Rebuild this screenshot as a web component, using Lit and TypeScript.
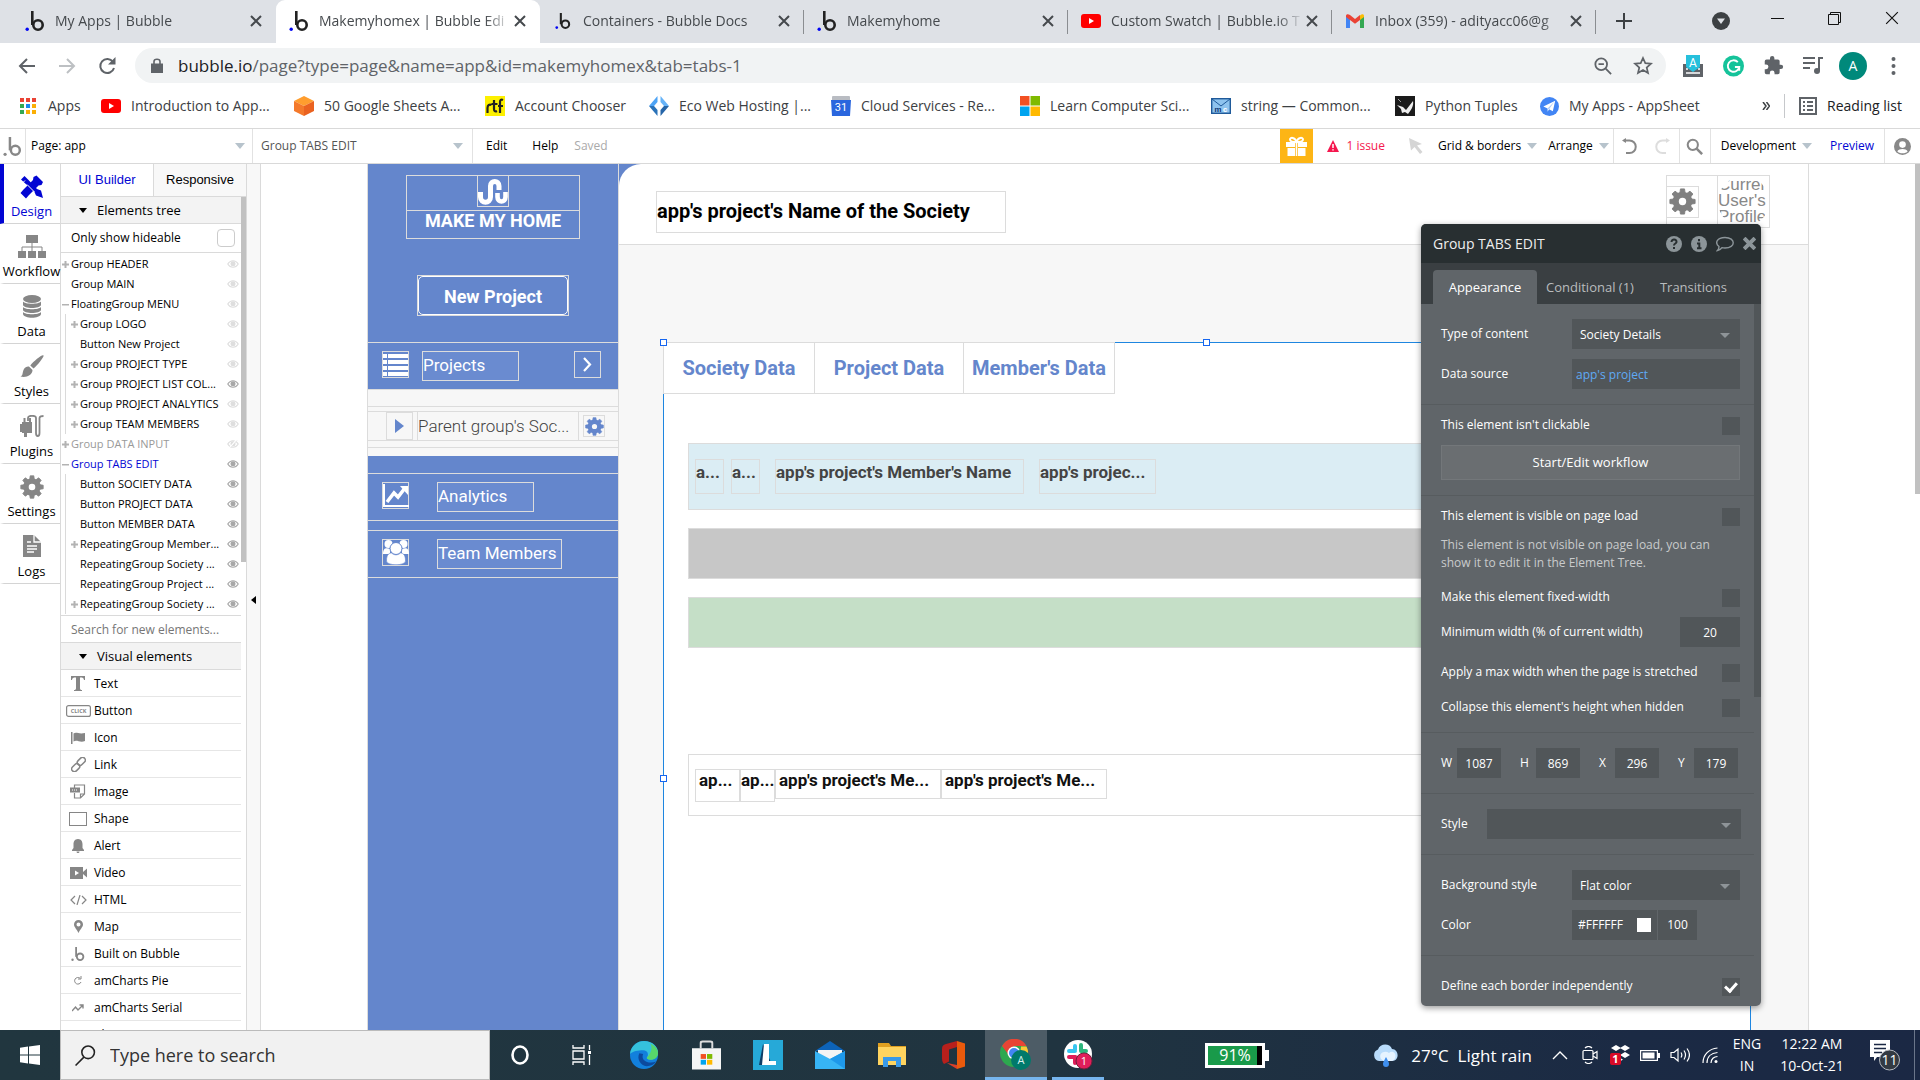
import { LitElement, html, svg, css, nothing } from "lit";
import { customElement } from "lit/decorators.js";
import { classMap } from "lit/directives/class-map.js";

const icon = (w: number, h: number, box: string, body: unknown) =>
  html`<svg width=${w} height=${h} viewBox=${box} fill="currentColor" aria-hidden="true">${body}</svg>`;

const turns = [0, 45, 90, 135, 180, 225, 270, 315];
const gear = (s: number) =>
  icon(s, s, "0 0 24 24", svg`<circle cx="12" cy="12" r="6" fill="none" stroke="currentColor" stroke-width="5.4"/>
    ${turns.map((t) => svg`<path d="M9.6 5 L10.2 .8 H13.8 L14.4 5 Z" stroke="currentColor" stroke-width=".8" transform="rotate(${t} 12 12)"/>`)}`);
const bubble = (s: number, dot = "#0205f3") =>
  icon(s, s, "0 0 20 20", svg`<circle cx="13" cy="14" r="4.7" fill="none" stroke="currentColor" stroke-width="2.6"/>
    <path d="M6 0h2.600v14H6z"/><circle cx="2.200" cy="18.200" r="1.700" fill=${dot}/>`);
const cross = (s: number, w = 2) =>
  icon(s, s, "0 0 12 12", svg`<path d="M1 1 11 11M11 1 1 11" stroke="currentColor" stroke-width=${w}/>`);
const youtube = icon(20, 14, "0 0 20 14", svg`<rect width="20" height="14" rx="3" fill="#f00"/><path d="M8 4v6l5-3z" fill="#fff"/>`);
const gmail = icon(18, 14, "0 0 18 14", svg`<path d="M0 2v12h4V5z" fill="#4285f4"/><path d="M18 2v12h-4V5z" fill="#34a853"/>
  <path d="M14 1.5 V6 l4-3V2c0-2-2-2.500-4-.5z" fill="#fbbc04"/><path d="M0 2c0-2 2-2.500 4-.9L9 5l5-3.900V6L9 9.800 0 3z" fill="#ea4335"/>`);
const magnifier = (s: number, w = 2) =>
  icon(s, s, "0 0 20 20", svg`<circle cx="8" cy="8" r="6" fill="none" stroke="currentColor" stroke-width=${w}/><path d="M12.500 12.500 19 19" stroke="currentColor" stroke-width=${w + 0.6}/>`);
const eye = (off = false) =>
  icon(12, 8, "0 0 24 16", svg`<path d="M12 1.500C6.500 1.500 3 5.500 1.500 8 3 10.500 6.500 14.500 12 14.500S21 10.500 22.500 8C21 5.500 17.500 1.500 12 1.500z" fill="none" stroke="currentColor" stroke-width="2.200"/><circle cx="12" cy="7.500" r="5"/>
  ${off ? svg`<path d="M5 16 19 0" stroke="#fff" stroke-width="3"/><path d="M7 16 20 1" stroke="currentColor" stroke-width="1.600"/>` : nothing}`);

const tabs = [
  { t: "My Apps | Bubble", i: bubble(20) },
  { t: "Makemyhomex | Bubble Edi", i: bubble(20), on: true },
  { t: "Containers - Bubble Docs", i: bubble(16) },
  { t: "Makemyhome", i: bubble(20) },
  { t: "Custom Swatch | Bubble.io T", i: youtube },
  { t: "Inbox (359) - adityacc06@g", i: gmail },
];

const marks = [
  { t: "Apps", i: icon(16, 17, "0 0 16 17", svg`
    ${[["#ea4335", 0, 0], ["#ea4335", 6, 0], ["#ea4335", 12, 0], ["#34a853", 0, 6], ["#1a88f0", 6, 6], ["#fbaf05", 12, 6], ["#34a853", 0, 12], ["#fbaf05", 6, 12], ["#fbaf05", 12, 12]]
      .map(([c, x, y]) => svg`<rect x=${x} y=${y} width="4" height="4" fill=${c}/>`)}`) },
  { t: "Introduction to App...", i: youtube },
  { t: "50 Google Sheets A...", i: icon(20, 20, "0 0 20 20", svg`<path d="M10 0 20 5 10 10 0 5z" fill="#ff9d2e"/><path d="M0 5l10 5v10L0 15z" fill="#f4792b"/><path d="M20 5 10 10v10l10-5z" fill="#ea6220"/>`) },
  { t: "Account Chooser", i: icon(20, 20, "0 0 20 20", svg`<rect width="20" height="20" fill="#fdf000"/><path d="M2.500 17v-5c0-3 2-4 4-3M9 4v9c0 2 1 3 3 2M6.500 8h6M15 17V6c0-2 1-3 3-2M13 10h5" fill="none" stroke="#222" stroke-width="2.200"/>`) },
  { t: "Eco Web Hosting |...", i: icon(20, 20, "0 0 20 20", svg`<path d="M8.500 0v6L5 10H0z" fill="#4da3f5"/><path d="M0 10h5l3.500 4v6z" fill="#2a72b8"/><path d="M11.500 0v6l3.500 4h5z" fill="#66b3f8"/><path d="M20 10h-5l-3.500 4v6z" fill="#2565a8"/>`) },
  { t: "Cloud Services - Re...", i: icon(20, 20, "0 0 20 20", svg`<rect x="1" width="18" height="5" rx="1" fill="#b9bcc2"/><path d="M0 4h20l-1 16H1z" fill="#2a66de"/><text x="10" y="15" font-size="11" text-anchor="middle" fill="#fff" font-family="Roboto">31</text>`) },
  { t: "Learn Computer Sci...", i: icon(20, 20, "0 0 20 20", svg`<path d="M0 0h9.500v9.500H0z" fill="#f25022"/><path d="M10.500 0H20v9.500h-9.500z" fill="#7fba00"/><path d="M0 10.500h9.500V20H0z" fill="#00a4ef"/><path d="M10.500 10.500H20V20h-9.500z" fill="#ffb900"/>`) },
  { t: "string — Common...", i: icon(20, 16, "0 0 20 16", svg`<rect x=".7" y=".7" width="18.600" height="14.600" fill="#8ec3ee" stroke="#1f5a9a" stroke-width="1.400"/><path d="M1 1l9 7 9-7" fill="none" stroke="#1f5a9a"/><text x="7" y="13.500" font-size="8" font-weight="700" text-anchor="middle" fill="#123c77" font-family="Roboto">m</text><text x="14" y="13.500" font-size="8" font-weight="700" text-anchor="middle" fill="#fff" font-family="Roboto">c</text>`) },
  { t: "Python Tuples", i: icon(20, 20, "0 0 20 20", svg`<rect width="20" height="20" fill="#1b1b1b"/><path d="M2 9l6 2 3 3 7-9c1 5-2 9-5 13l-3-2-3 1-1-4z" fill="#eee"/><path d="M3 3l3 3" stroke="#999"/>`) },
  { t: "My Apps - AppSheet", i: icon(19, 19, "0 0 20 20", svg`<circle cx="10" cy="10" r="10" fill="#4285f4"/><path d="M3.500 10 16 4l-2.500 11-4-2L8 15.500V12z" fill="#fff"/><path d="M8 12l7-7-5.500 8" fill="#a9c8fb"/>`) },
];

const rail = [
  { t: "Design", i: icon(24, 24, "0 0 24 24", svg`<path d="M4.500 1 8 4.500 17 14l4 1.500L23 23l-7-2.500-1.500-3.500L1 4.500z"/><path d="M3.500 14.500 13 5l.5-3 3-1.500L23 7l-1.500 3-3 .5L9 20l-3 3.500L.5 18z" /><path d="M7 9.500 14.500 17M5 5.500 3 7.500" stroke="#fff" stroke-width="1"/>`) },
  { t: "Workflow", i: icon(28, 24, "0 0 28 24", svg`<path d="M8 0h12v8H8zM0 16h8v7H0zM10 16h8v7h-8zM20 16h8v7h-8z"/><path d="M4 16v-4h20v4M14 8v8" fill="none" stroke="currentColor"/>`) },
  { t: "Data", i: icon(20, 23, "0 0 20 23", svg`<ellipse cx="10" cy="4" rx="9" ry="4"/><path d="M1 6.500c2 3 16 3 18 0v3.500c-1 4-17 4-18 0zM1 12c2 3 16 3 18 0v3c-1 4-17 4-18 0zM1 17c2 3 16 3 18 0v2c-1 5-17 5-18 0z"/>`) },
  { t: "Styles", i: icon(24, 23, "0 0 24 23", svg`<path d="M23.500.5c1 1-6 10-10 13l-3.200-3C14 6 22-.8 23.500.5zM9 11.500l3.500 3.500c0 5-6 8-12 6.500 3-1.500 1.500-4 3.500-7.500 1-2 3-2.800 5-2.500z"/>`) },
  { t: "Plugins", i: icon(25, 23, "0 0 25 23", svg`<path d="M3 7h10v11H3zM4.500 3h2v4h-2zM10 3h2v4h-2zM1 9h2v8H1zM5 18h3v4H5z"/><path d="M9 6V3c0-3 8-3 8 0v15c0 4 3.500 4 3.500 0V3c0-2 2-2 4-2" fill="none" stroke="currentColor" stroke-width="1.800"/>`) },
  { t: "Settings", i: gear(24) },
  { t: "Logs", i: icon(18, 22, "0 0 18 22", svg`<path d="M0 0h11l7 7v15H0z"/><path d="M11 0v7h7M4 11h10M4 14h10M4 17h7M4 7h4" fill="none" stroke="#fff" stroke-width="1.300"/>`) },
];

type Node = { t: string; d: number; m?: string; e?: string; c?: string };
const tree: Node[] = [
  { t: "Group HEADER", d: 0, m: "+" },
  { t: "Group MAIN", d: 0 },
  { t: "FloatingGroup MENU", d: 0, m: "-" },
  { t: "Group LOGO", d: 1, m: "+" },
  { t: "Button New Project", d: 1 },
  { t: "Group PROJECT TYPE", d: 1, m: "+" },
  { t: "Group PROJECT LIST COL...", d: 1, m: "+", e: "dark" },
  { t: "Group PROJECT ANALYTICS", d: 1, m: "+" },
  { t: "Group TEAM MEMBERS", d: 1, m: "+" },
  { t: "Group DATA INPUT", d: 0, m: "+", e: "off", c: "muted" },
  { t: "Group TABS EDIT", d: 0, m: "-", e: "dark", c: "chosen" },
  { t: "Button SOCIETY DATA", d: 1, e: "dark" },
  { t: "Button PROJECT DATA", d: 1, e: "dark" },
  { t: "Button MEMBER DATA", d: 1, e: "dark" },
  { t: "RepeatingGroup Member...", d: 1, m: "+", e: "dark" },
  { t: "RepeatingGroup Society ...", d: 1, e: "dark" },
  { t: "RepeatingGroup Project ...", d: 1, e: "dark" },
  { t: "RepeatingGroup Society ...", d: 1, m: "+", e: "dark" },
];

const visuals = [
  { t: "Text", i: icon(14, 15, "0 0 14 15", svg`<path d="M0 0h14v4h-1c-.5-2-1-2.500-4-2.500V12c0 1.500.5 2 2 2v1H3v-1c1.500 0 2-.5 2-2V1.500C2 1.500 1.500 2 1 4H0z"/>`) },
  { t: "Button", i: icon(25, 12, "0 0 25 12", svg`<rect x=".6" y=".6" width="23.800" height="10.800" rx="2" fill="none" stroke="currentColor" stroke-width="1.200"/><text x="12.500" y="8" font-size="5.500" font-weight="700" text-anchor="middle" font-family="Open Sans">CLICK</text>`) },
  { t: "Icon", i: icon(14, 12, "0 0 14 12", svg`<path d="M0 0h1.500v12H0zM2.500 1.500c3-2 5 1 11.500-.5v8c-5 2-8-1.500-11.500.5z"/>`) },
  { t: "Link", i: icon(15, 15, "0 0 15 15", svg`<g fill="none" stroke="currentColor" stroke-width="1.500"><rect x="6" y="1.500" width="9" height="5.500" rx="2.700" transform="rotate(-45 10.500 4.500)"/><rect x="0" y="8" width="9" height="5.500" rx="2.700" transform="rotate(-45 4.500 10.500)"/></g>`) },
  { t: "Image", i: icon(16, 15, "0 0 16 15", svg`<path d="M4.500 4V1h10v9l-4 4h-6V9M14.500 10h-4v4" fill="none" stroke="currentColor" stroke-width="1.200"/><rect y="3.500" width="10" height="5"/><path d="M2 6h6" stroke="#fff" stroke-width="1" stroke-dasharray="1 1"/>`) },
  { t: "Shape", i: icon(18, 14, "0 0 18 14", svg`<rect x=".5" y=".5" width="17" height="13" fill="#fff" stroke="currentColor"/>`) },
  { t: "Alert", i: icon(12, 14, "0 0 12 14", svg`<path d="M6 0c3.500 0 4.500 3 4.500 5v4L12 11v1H0v-1l1.500-2V5c0-2 1-5 4.500-5zM4.500 12.500h3c0 2-3 2-3 0z"/>`) },
  { t: "Video", i: icon(17, 12, "0 0 17 12", svg`<path d="M0 0h13v12H0z"/><path d="M13 5l4-3.500v9L13 7z"/><path d="M5 3.500v5L9 6z" fill="#fff"/>`) },
  { t: "HTML", i: icon(17, 10, "0 0 17 10", svg`<path d="M5 1 1 5l4 4M12 1l4 4-4 4M10 0 7 10" fill="none" stroke="currentColor" stroke-width="1.200"/>`) },
  { t: "Map", i: icon(9, 13, "0 0 9 13", svg`<path fill-rule="evenodd" d="M4.500 0A4.500 4.500 0 0 1 9 4.500C9 7 6 9.500 4.500 13 3 9.500 0 7 0 4.500A4.500 4.500 0 0 1 4.500 0zm0 2.500a2 2 0 1 0 0 4 2 2 0 0 0 0-4z"/>`) },
  { t: "Built on Bubble", i: bubble(14, "#888") },
  { t: "amCharts Pie", i: icon(8, 9, "0 0 8 9", svg`<path d="M6 2.200A3.300 3.300 0 1 0 7 6M7 0v3H4" fill="none" stroke="currentColor"/>`) },
  { t: "amCharts Serial", i: icon(12, 8, "0 0 12 8", svg`<path d="M0 7l3.500-4L6 6l5-5M7.500 1H11v3.500" fill="none" stroke="currentColor" stroke-width="1.400"/>`) },
  { t: "Chart", i: icon(10, 10, "0 0 10 10", svg`<path d="M0 0h10v10H0z"/>`) },
];

const slots = [
  { n: "Cortana", i: icon(18, 20, "0 0 18 20", svg`<ellipse cx="9" cy="10" rx="7.500" ry="8.500" fill="none" stroke="#fff" stroke-width="2.600"/>`) },
  { n: "Task view", i: icon(20, 20, "0 0 20 20", svg`<path d="M1 0v3h11V0M1 20v-3h11v3M1 6h11v8H1zM17.500 0v5M17.500 10v10" fill="none" stroke="#fff" stroke-width="1.300"/><path d="M16 6h3v3h-3z" fill="#fff"/>`) },
  { n: "Edge", i: icon(28, 30, "0 0 30 30", svg`<circle cx="15" cy="15" r="15" fill="#1280dc"/><path d="M0 14C1 5 8 0 15 0c9 0 15 6 15 12 0 5-4 8-8 8-3 0-4-1-4-2 2-2 2-8-4-8-5 0-11 1-14 4z" fill="#35c1dd"/><path d="M22 3c5 2 8 6 8 10 0 4-3 7-8 7-3 0-4-1-4-2 3-3 7-9 4-15z" fill="#58d66a"/><path d="M10 13c-3 6 1 13 8 14 4 0 8-2 10-5-7 3-17 0-14-8z" fill="#0c4a9e"/>`) },
  { n: "Store", i: icon(29, 30, "0 0 30 30", svg`<path d="M9 8V2.500C9 1.500 10 1 11 1h8c1 0 2 .5 2 1.500V8" fill="none" stroke="#ddd" stroke-width="2"/><path d="M0 8h30v22H0z" fill="#f5f5f5"/><path d="M9 14h5.500v5H9z" fill="#f25022"/><path d="M15.500 14H21v5h-5.500z" fill="#7fba00"/><path d="M9 20h5.500v5H9z" fill="#00a4ef"/><path d="M15.500 20H21v5h-5.500z" fill="#ffb900"/>`) },
  { n: "Launcher", i: icon(30, 30, "0 0 30 30", svg`<path d="M0 0h30v30H0z" fill="#26a9d8"/><path d="M10 4 6 25h13z" fill="#0e3d66"/><path d="M11 4h5v17h7v4H9z" fill="#fff"/>`) },
  { n: "Mail", i: icon(30, 28, "0 0 30 28", svg`<path d="M15 0 30 10H0z" fill="#0d63b8"/><path d="M3 9h24v10H3z" fill="#f4f4f4"/><path d="M0 10l15 8 15-8v18H0z" fill="#37b4f5"/><path d="M30 10v18L15 18z" fill="#1e98ea"/>`) },
  { n: "File Explorer", i: icon(28, 26, "0 0 28 24", svg`<path d="M0 0h11l2 3h15v19H0z" fill="#e0a020"/><path d="M0 4h28v18H0z" fill="#ffd45f"/><path d="M5 24V14h18v10h-5v-6h-8v6z" fill="#3a9ae8"/>`) },
  { n: "Office", i: icon(24, 28, "0 0 24 28", svg`<path d="M15 0l8 2.500v23L15 28z" fill="#ea5a0c"/><path d="M15 0v6L7 8.500v12L2 23c-2-2-2-4-2-8V8c0-3 1-4 4-5z" fill="#b8201c"/><path d="M5 22l10 2v4z" fill="#d8402a"/>`) },
  { n: "Chrome", on: "full", i: icon(32, 32, "0 0 32 32", svg`<circle cx="14" cy="14" r="14" fill="#2da84f"/><path d="M2 7a14 14 0 0 1 24.500 0H14L8 15z" fill="#e84435"/><path d="M26.500 7.500A14 14 0 0 1 14 28l6-11 1-9.500z" fill="#fcc934"/><circle cx="14" cy="14" r="6.500" fill="#fff"/><circle cx="14" cy="14" r="5" fill="#4285f4"/><circle cx="21" cy="21" r="10" fill="#00796b"/><text x="21" y="25" font-size="11" text-anchor="middle" fill="#d7efec" font-family="Open Sans">A</text>`) },
  { n: "Slack", on: "part", i: icon(30, 30, "0 0 30 30", svg`<circle cx="15" cy="14" r="14" fill="#fff"/><g stroke-width="4" stroke-linecap="round"><path d="M12 6v4M6 11h6" stroke="#36c5f0"/><path d="M18 5v6M18 11h5" stroke="#2eb67d"/><path d="M6 17h6" stroke="#e01e5a"/><path d="M12 17v6" stroke="#e01e5a"/><path d="M18 17h5" stroke="#ecb22e"/></g><circle cx="21" cy="21" r="8" fill="#e01e5a" stroke="#71203b"/><text x="21" y="25" font-size="11" text-anchor="middle" fill="#fff" font-family="Open Sans">1</text>`) },
];

const tray = [
  { n: "Show hidden icons", i: icon(16, 9, "0 0 16 9", svg`<path d="M1 8l7-7 7 7" fill="none" stroke="#fff" stroke-width="1.400"/>`) },
  { n: "Camera", i: icon(16, 18, "0 0 16 18", svg`<g fill="none" stroke="#fff" stroke-width="1.200"><rect x="1" y="4.500" width="10" height="9" rx="1"/><path d="M11 8l4-2.500v7L11 10M3 2c2-2 5-2 7 0M3 16c2 2 5 2 7 0"/></g>`) },
  { n: "Dropbox", i: icon(20, 20, "0 0 20 20", svg`<path d="M6 0l5 3-5 3-5-3zM15 0l5 3-5 3-5-3zM15 7l5 3-5 3-5-3zM10 13l3 1.500-3 2z" fill="#fff"/><rect y="8" width="11" height="12" rx="2" fill="#d90b27"/><text x="5.500" y="18" font-size="11" font-weight="700" text-anchor="middle" fill="#fff" font-family="Open Sans">1</text>`) },
  { n: "Battery", i: icon(20, 11, "0 0 20 11", svg`<rect x=".6" y=".6" width="16.800" height="9.800" fill="none" stroke="#fff" stroke-width="1.200"/><path d="M2.500 2.500h12v6h-12zM18 3h2v5h-2z" fill="#fff"/>`) },
  { n: "Volume", i: icon(20, 16, "0 0 20 16", svg`<path d="M1 5.500h3L8 2v12l-4-3.500H1zM11 5.500c1 1.500 1 3.500 0 5M14 3.500c2 3 2 6 0 9M17 1.500c3 4 3 9 0 13" fill="none" stroke="#fff" stroke-width="1.200"/>`) },
  { n: "Network", i: icon(16, 16, "0 0 16 16", svg`<path d="M1 16C1 8 7 1.500 15.500 1M5 16C5 10 9 6 15.500 5.500M9 16c0-4 3-6.500 6.500-6.500" fill="none" stroke="#fff" stroke-width="1.200"/><circle cx="14" cy="14.500" r="1.500" fill="#fff"/>`) },
];

@customElement("app-root")
export class AppRoot extends LitElement {
  static styles = css`
    :host {
      display: flex; flex-direction: column; height: 100vh; overflow: hidden; background: #fff; color: #000;
      font-family: "Open Sans", "Noto Sans", sans-serif; font-size: 12px; line-height: 18px;
    }
    * { box-sizing: border-box; }
    svg { display: block; flex: none; }
    button, input, select { font: inherit; color: inherit; margin: 0; padding: 0; border: 0; background: none; border-radius: 0; outline: none; }
    button { white-space: nowrap; }
    a { color: inherit; text-decoration: none; }
    .caret { border: 5px solid transparent; border-top: 6px solid #b7c3cc; border-bottom: 0; flex: none; }

    /* browser chrome */
    .tabs { display: flex; height: 43px; background: #dee1e6; padding-left: 12px; flex: none; font-size: 14px; color: #45494d; }
    .tab { display: flex; align-items: center; flex: 0 1 264px; padding: 0 14px 2px 13px; gap: 10px; min-width: 0; position: relative; }
    .tab .fav { width: 20px; display: flex; justify-content: center; color: #222; }
    .tab .name { flex: 1; min-width: 0; margin-right: -8px; overflow: hidden; white-space: nowrap; -webkit-mask-image: linear-gradient(90deg, #000 86%, transparent); mask-image: linear-gradient(90deg, #000 86%, transparent); }
    .tab.line::after { content: ""; position: absolute; right: 0; top: 10px; height: 24px; width: 1px; background: #8a8d91; }
    .tab.on { background: #fff; border-radius: 9px 9px 0 0; }
    .plus { display: flex; align-items: center; padding: 0 20px 2px; color: #3c4043; }
    .win { margin-left: auto; display: flex; align-items: center; color: #111; }
    .win button { width: 57px; height: 36px; display: grid; place-items: center; align-self: flex-start; }
    .win .search-tabs { height: 42px; }
    .toolbar { display: flex; align-items: center; height: 45px; padding: 0 7px 0 7px; flex: none; color: #5f6368; }
    .toolbar .ib { width: 40px; height: 34px; display: grid; place-items: center; flex: none; }
    .toolbar .dim { color: #bdc0c3; }
    .omni { flex: 1; height: 35px; margin: 0 7px 0 8px; padding: 0 3px 0 16px; border-radius: 18px; background: #f1f3f4; display: flex; align-items: center; gap: 15px; }
    .omni-tools { display: flex; }
    .url { flex: 1; font-size: 17px; color: #5f6368; white-space: nowrap; }
    .url b { font-weight: 400; color: #202124; }
    .me { width: 28px; height: 28px; border-radius: 50%; background: #00897b; color: #fff; font-size: 14px; display: grid; place-items: center; }
    .marks { display: flex; align-items: center; height: 40px; flex: none; padding: 0 18px 4px 20px; font-size: 14px; color: #3c4043; }
    .marklist { flex: 1; display: grid; grid-template-columns: 81px 193px 191px 164px 182px 189px 191px 184px 145px 1fr; align-items: center; }
    .mark { display: flex; align-items: center; gap: 10px; white-space: nowrap; }
    .mark:first-child { gap: 12px; }
    .reading { display: flex; align-items: center; gap: 10px; border-left: 1px solid #c6c8cb; padding-left: 14px; margin-left: 14px; height: 24px; color: #202124; }

    /* editor bar */
    .bar { display: flex; height: 36px; border-top: 1px solid #d9d9d9; border-bottom: 1px solid #d9d9d9; flex: none; align-items: stretch; }
    .bar > * { display: flex; align-items: center; }
    .logo { width: 26px; border-right: 1px solid #e2e2e2; color: #888; justify-content: center; }
    .pick { justify-content: space-between; border-right: 1px solid #e2e2e2; }
    .page-pick { width: 227px; padding: 0 7px 0 5px; }
    .group-pick { width: 220px; padding: 0 9px 0 8px; color: #555; }
    .menus { gap: 25px; padding-left: 13px; }
    .menus .saved { color: #aaa; margin-left: -9px; }
    .right { margin-left: auto; }
    .right > * { height: 100%; display: flex; align-items: center; }
    .gift { width: 33px; background: #fdb515; color: #fff; justify-content: center; }
    .issue { color: #f5174e; gap: 7px; padding: 0 24px 0 14px; }
    .drop { gap: 6px; padding-left: 15px; }
    .drop.arrange { padding: 0 4px 0 11px; }
    .drop.env { padding-left: 10px; }
    .tool { width: 33px; justify-content: center; color: #888; }
    .tool.find-tool { width: 31px; }
    .tool.account { width: 36px; }
    .tool.faint { color: #ddd; }
    .arrow { color: #d5d5d5; }
    .cell { border-left: 1px solid #e2e2e2; }
    .preview { color: #0205d3; padding: 0 10px 0 18px; }

    /* workspace */
    .work { flex: 1; min-height: 0; display: flex; position: relative; overflow: hidden; }
    .rail { width: 61px; border-right: 1px solid #dadada; flex: none; }
    .rail button { width: 100%; height: 60px; border-bottom: 1px solid #d4d4d4; display: flex; flex-direction: column; align-items: center; justify-content: space-between; padding: 11px 1px 3px 0; font-size: 13px; border-left: 4px solid transparent; white-space: nowrap; }
    .rail svg { color: #868686; }
    .rail .on, .rail .on svg { color: #0205d3; }
    .rail .on { border-left-color: #0205d3; }
    .side { width: 186px; border-right: 1px solid #dadada; flex: none; display: flex; flex-direction: column; overflow: hidden; }
    .modes { display: flex; height: 33px; border-bottom: 1px solid #dadada; flex: none; font: 13px/18px "Liberation Sans", Arial, sans-serif; }
    .modes button { flex: 1; background: #f8f8f8; }
    .modes .on { background: #fff; color: #0205d3; border-right: 1px solid #dadada; }
    .lists { flex: 1; min-height: 0; position: relative; padding-right: 5px; overflow: hidden; }
    .thumb { position: absolute; right: 0; top: 0; width: 5px; height: 365px; background: #c1c1c1; }
    .head { width: 100%; height: 27px; display: flex; align-items: center; gap: 10px; padding-left: 18px; background: #f3f3f3; border-bottom: 1px solid #dadada; font-size: 13px; }
    .head .caret { border-width: 4px; border-top: 5px solid #000; border-bottom: 0; }
    .hide { display: flex; align-items: center; justify-content: space-between; height: 29px; padding: 0 6px 0 10px; border-bottom: 1px solid #dadada; }
    .hide input { appearance: none; width: 18px; height: 18px; border: 1px solid #ccc; border-radius: 4px; }
    .tree { list-style: none; margin: 0; padding: 1px 0 0; border-bottom: 1px solid #dadada; height: 363px; font-size: 11px; }
    .node { display: flex; align-items: center; height: 20px; padding-right: 2px; color: #000; padding-left: 1px; }
    .node.deep { margin-left: 4px; border-left: 1px solid #dadada; padding-left: 5px; }
    .node .mk { width: 9px; color: #b3b3b3; }
    .node .nm { flex: 1; white-space: nowrap; }
    .node .ey { color: #dedede; }
    .node .ey.dark { color: #a8a8a8; }
    .muted .nm { color: #999; }
    .chosen .nm { color: #0205d3; }
    .find { display: block; width: 100%; height: 27px; border-bottom: 1px solid #dadada; padding-left: 10px; }
    .find::placeholder { color: #767676; opacity: 1; }
    .vis { width: 100%; height: 27px; display: flex; align-items: center; border-bottom: 1px solid #e6e6e6; padding: 1px 0 0 1px; text-align: left; }
    .vis .pic { width: 32px; display: flex; justify-content: center; color: #868686; }
    .strip { width: 14px; background: #f8f8f8; border-right: 1px solid #dadada; flex: none; display: grid; place-items: center; padding-top: 6px; }
    .strip i { border: 4px solid transparent; border-right: 5px solid #000; border-left: 0; }

    /* page canvas */
    .canvas { flex: 1; min-width: 0; display: flex; padding: 0 106px; font-family: Roboto, "Noto Sans", sans-serif; }
    .canvas-thumb { width: 5px; height: 330px; background: #c1c1c1; flex: none; }
    .menu { width: 252px; flex: none; background: #6486cc; border: 1px solid #dcdcdc; border-width: 0 1px; color: #fff; display: flex; flex-direction: column; }
    .box { border: 1px solid #dcdcdc; }
    .brand { width: 174px; height: 64px; margin: 11px auto 0; display: flex; flex-direction: column; align-items: center; font-size: 18px; font-weight: 700; line-height: 20px; }
    .brand .mark-box { width: 32px; height: 32px; margin-top: -1px; display: grid; place-items: center; }
    .brand span { width: 100%; text-align: center; margin-top: 3px; border-top: 1px solid #dcdcdc; }
    .new { width: 152px; height: 41px; margin: 36px auto 26px; border: 1px solid #dcdcdc; font-size: 18px; font-weight: 700; display: flex; }
    .new span { flex: 1; align-self: stretch; border: 1px solid #fff; border-radius: 5px; display: grid; place-items: center; padding-top: 2px; }
    .entry { display: flex; align-items: flex-start; border: 1px solid #dcdcdc; border-width: 1px 0; height: 48px; padding: 8px 17px 0 14px; font-size: 17px; }
    .entry .sq { width: 27px; height: 27px; border: 1px solid #dcdcdc; display: grid; place-items: center; }
    .entry .lab { border: 1px solid #dcdcdc; height: 30px; line-height: 27px; width: 97px; margin-left: 28px; background: #6a8bd0; white-space: nowrap; text-align: left; }
    .entry.first .lab { margin-left: 13px; }
    .entry .lab.wide { width: 125px; }
    .entry .end { margin-left: auto; }
    .nest { background: #f7f7f7; color: #444; height: 66px; display: flex; flex-direction: column; padding: 16px 0 8px; flex: none; }
    .nest .outer { border: 1px solid #dcdcdc; border-width: 1px 0; padding: 4px 0 6px; }
    .nest .line { height: 30px; border: 1px solid #dcdcdc; border-width: 1px 0; display: flex; align-items: center; padding-left: 18px; font-size: 17px; font-weight: 300; }
    .nest .sq { width: 27px; height: 28px; border: 1px solid #dcdcdc; display: grid; place-items: center; color: #6486cc; margin-right: 4px; }
    .nest .txt { width: 162px; border: 1px solid #dcdcdc; border-width: 0 1px; line-height: 28px; white-space: nowrap; overflow: hidden; margin-right: 4px; }
    .nest .cog { width: 22px; height: 22px; border: 1px solid #dcdcdc; display: grid; place-items: center; color: #6486cc; }
    .gap { height: 17px; flex: none; }
    .gap.small { height: 9px; }
    .page { flex: 1; min-width: 0; background: #f7f7f7; border-right: 1px solid #dcdcdc; display: flex; flex-direction: column; }
    .hdr-back { background: #6486cc; flex: none; }
    .hdr { background: #fff; border-bottom: 1px solid #dcdcdc; border-top-left-radius: 22px; height: 81px; display: flex; align-items: flex-start; padding: 11px 38px 0 37px; }
    .title { margin: 16px 0 0; border: 1px solid #dcdcdc; width: 350px; height: 42px; font-size: 20px; line-height: 38px; font-weight: 700; white-space: nowrap; }
    .who { margin-left: auto; width: 104px; height: 53px; border: 1px solid #dcdcdc; display: flex; align-items: center; justify-content: space-between; }
    .who .cogbox { width: 32px; height: 32px; border: 1px solid #dcdcdc; border-left: 0; display: grid; place-items: center; color: #808080; }
    .who .face { width: 52px; height: 51px; border-left: 1px solid #dcdcdc; }
    .who .face div { width: 51px; height: 51px; border-radius: 50%; overflow: hidden; color: #888; font: 17px/16px "Liberation Sans", Arial, sans-serif; padding-top: 1px; }
    .group { flex: 1; min-height: 0; margin: 97px 57px 0 44px; background: #fff; border: 1px solid #1e86e0; border-bottom: 0; position: relative; display: flex; flex-direction: column; }
    .handle { position: absolute; width: 7px; height: 7px; background: #fff; border: 1px solid #1565f0; left: -4px; }
    .h1 { top: -4px; }
    .h2 { top: -4px; left: calc(50% - 4px); }
    .h3 { top: 432px; }
    .gtabs { display: flex; margin: -1px 0 0 -1px; }
    .gtabs button { height: 52px; width: 149px; background: #fff; border: 1px solid #dcdcdc; border-right-width: 0; color: #6486cc; font-size: 20px; font-weight: 700; }
    .gtabs button:first-child { width: 151px; }
    .gtabs button:last-child { border-right-width: 1px; width: 152px; }
    .rep { margin: 0 24px; border: 1px solid #dcdcdc; height: 51px; flex: none; display: flex; align-items: flex-start; font-weight: 700; font-size: 17px; line-height: 28px; white-space: nowrap; }
    .rep.blue { background: #dbedf4; height: 67px; margin-top: 49px; padding: 15px 6px; gap: 7px; color: #444; }
    .rep.gray { background: #c7c7c7; margin-top: 18px; }
    .rep.green { background: #c5dfc7; margin-top: 18px; }
    .rep.plain { margin-top: 106px; height: 62px; padding: 14px 6px; color: #111; }
    .rep span { border: 1px solid #dcdcdc; overflow: hidden; }
    .blue span { height: 35px; width: 29px; line-height: 24px; }
    .blue .long { width: 249px; margin: 0 8px; }
    .blue .mid { width: 117px; }
    .plain span { height: 33px; width: 45px; line-height: 20px; padding-left: 3px; }
    .plain .tight { width: 35px; padding-left: 0; }
    .plain .long { width: 166px; height: 30px; padding-left: 3px; }

    /* property editor */
    .props { position: absolute; right: 159px; top: 60px; width: 340px; height: 782px; border-radius: 5px; background: #606569; color: #fff; overflow: hidden; box-shadow: 0 2px 6px rgba(0,0,0,.4); display: flex; flex-direction: column; }
    .ptitle { height: 39px; background: #282f31; display: flex; align-items: center; gap: 9px; padding: 0 5px 0 12px; color: #eee; flex: none; }
    .ptitle h2 { flex: 1; margin: 0; font-size: 14px; font-weight: 400; }
    .ptitle button { color: #8c9599; }
    .ptabs { height: 41px; background: #3a3f42; display: flex; align-items: flex-end; padding: 0 12px; flex: none; font-size: 13px; color: #b9bcbe; }
    .ptabs button { height: 34px; padding: 0 9px 0 9px; }
    .ptabs .on { width: 104px; background: #606569; color: #fff; border-radius: 4px 4px 0 0; }
    .ptabs .last { margin-left: 17px; padding: 0; }
    .body { flex: 1; position: relative; }
    .pthumb { position: absolute; right: 0; top: 0; width: 7px; height: 393px; background: #515659; }
    .sec { padding: 15px 14px 15px 20px; margin-right: 7px; border-bottom: 1px solid #575c5f; display: flex; flex-direction: column; gap: 10px; }
    .sec.up { padding-top: 12px; }
    .sec.last { padding-top: 22px; border: 0; }
    .row { display: flex; align-items: center; justify-content: space-between; min-height: 18px; }
    .row.lead { margin-top: 7px; }
    .row label { white-space: nowrap; }
    .row.check { height: 18px; }
    .row.check label { padding-bottom: 2px; }
    .tick { appearance: none; width: 18px; height: 18px; background: #515659; display: grid; place-items: center; }
    .tick:checked::after { content: ""; width: 9px; height: 5px; border: solid #fff; border-width: 0 0 3px 3px; transform: rotate(-48deg); margin-bottom: 3px; }
    .sel { position: relative; width: 168px; height: 30px; }
    .sel.big { width: 254px; margin-right: -1px; }
    .sel select { appearance: none; width: 100%; height: 100%; background: #515659; padding: 2px 8px 0; display: block; }
    .sel::after { content: ""; position: absolute; right: 10px; top: 14px; border: 5px solid transparent; border-top: 5px solid #8e9498; border-bottom: 0; }
    .fld { width: 168px; height: 30px; background: #515659; padding: 0 4px; }
    .fld.src { color: #5faaf5; }
    .fld.num { width: 60px; text-align: center; }
    .flow { height: 35px; background: #6a6e71; border: 1px solid #73777a; font-size: 13px; padding-bottom: 1px; }
    .note { margin: 0; color: #c9cbcc; height: 36px; white-space: nowrap; }
    .dims { display: grid; grid-template-columns: repeat(4, 79px); }
    .dims div { display: flex; align-items: center; }
    .dims label { width: 16px; }
    .dims input { width: 44px; height: 30px; background: #515659; text-align: center; }
    .col { display: flex; width: 168px; gap: 1px; }
    .hex { display: flex; align-items: center; width: 85px; height: 30px; background: #515659; padding: 0 6px; justify-content: space-between; }
    .hex input { width: 50px; }
    .hex i { width: 14px; height: 14px; background: #fff; }
    .col .pct { width: 39px; background: #515659; text-align: center; }

    /* taskbar */
    .task { height: 50px; flex: none; display: flex; align-items: stretch; background: linear-gradient(90deg, #21363f 0%, #203440 55%, #1b2a44 85%, #1b2844 100%); color: #fff; }
    .start { width: 60px; display: grid; place-items: center; }
    .search { width: 430px; background: #f1f1f1; border: 1px solid #bbb; display: flex; align-items: center; gap: 14px; padding: 0 14px; color: #222; }
    .search input { flex: 1; min-width: 0; font-size: 18px; }
    .search input::placeholder { color: #333; opacity: 1; }
    .slot { width: 62px; margin-left: -1px; margin-right: 1px; display: grid; place-items: center; border-bottom: 3px solid transparent; padding-top: 3px; }
    .slot.full { background: #4d5c66; border-bottom-color: #76b5ee; }
    .slot.part { width: 52px; margin: 0 6px 0 4px; border-bottom-color: #76b5ee; }
    .level { align-self: center; width: 60px; height: 25px; border: 3px solid #fff; background: linear-gradient(90deg, #199a4a 90%, #000 90%); margin-left: 95px; font-size: 16px; line-height: 19px; text-align: center; position: relative; }
    .level::after { content: ""; position: absolute; right: -7px; top: 4px; width: 4px; height: 11px; background: #fff; }
    .wx { margin-left: auto; display: flex; align-items: center; gap: 13px; font-size: 17px; padding: 2px 13px 0 0; white-space: pre; }
    .tray { width: 30px; display: grid; place-items: center; }
    .lang, .clock { width: 44px; display: flex; flex-direction: column; justify-content: center; gap: 4px; text-align: center; font-size: 14px; }
    .clock { width: 86px; }
    .bell { width: 60px; display: grid; place-items: center; border-right: 1px solid #6b768a; margin-right: 5px; }
  `;

  private check(id: string, text: string, lead = false, on = false) {
    return html`<div class=${classMap({ row: true, check: true, lead })}>
      <label for=${id}>${text}</label><input class="tick" id=${id} type="checkbox" .checked=${on} />
    </div>`;
  }

  private browser() {
    return html`
      <div class="tabs">
        ${tabs.map((t, i) => html`<div class=${classMap({ tab: true, on: !!t.on, line: i > 1 })}>
          <span class="fav">${t.i}</span><span class="name">${t.t}</span><button aria-label="Close tab">${cross(12)}</button>
        </div>`)}
        <button class="plus" aria-label="New tab">${icon(16, 16, "0 0 16 16", svg`<path d="M7 0h2v7h7v2H9v7H7V9H0V7h7z"/>`)}</button>
        <div class="win">
          <button class="search-tabs" aria-label="Tab search">${icon(18, 18, "0 0 18 18", svg`<circle cx="9" cy="9" r="9" fill="#3c4043"/><path d="M5 6.500h8L9 12z" fill="#dee1e6"/>`)}</button>
          <button aria-label="Minimize">${icon(13, 13, "0 0 13 13", svg`<path d="M0 6h13v1H0z"/>`)}</button>
          <button aria-label="Restore">${icon(13, 13, "0 0 13 13", svg`<path d="M.5 2.500h10v10H.5zM2.500 2.500v-2h10v10h-2" fill="none" stroke="currentColor"/>`)}</button>
          <button aria-label="Close window">${cross(14, 1)}</button>
        </div>
      </div>
      <div class="toolbar">
        <button class="ib" aria-label="Back">${icon(18, 16, "0 0 18 16", svg`<path d="M17 8H2M9 1 2 8l7 7" fill="none" stroke="currentColor" stroke-width="2"/>`)}</button>
        <button class="ib dim" aria-label="Forward">${icon(18, 16, "0 0 18 16", svg`<path d="M1 8h15M9 1l7 7-7 7" fill="none" stroke="currentColor" stroke-width="2"/>`)}</button>
        <button class="ib" aria-label="Reload">${icon(18, 18, "0 0 18 18", svg`<path d="M15 5a7 7 0 1 0 1 6" fill="none" stroke="currentColor" stroke-width="2"/><path d="M17.500 0v7.500H10z"/>`)}</button>
        <div class="omni">
          ${icon(12, 15, "0 0 12 15", svg`<path d="M0 5.500h12V15H0z"/><path d="M3 6V3.500c0-3 6-3 6 0V6" fill="none" stroke="currentColor" stroke-width="1.600"/>`)}
          <span class="url"><b>bubble.io</b>/page?type=page&name=app&id=makemyhomex&tab=tabs-1</span>
          <div class="omni-tools">
            <button class="ib" aria-label="Zoom">${icon(18, 18, "0 0 20 20", svg`<circle cx="8" cy="8" r="6.500" fill="none" stroke="currentColor" stroke-width="2"/><path d="M5 8h6M13 13l6 6" stroke="currentColor" stroke-width="2"/>`)}</button>
            <button class="ib" aria-label="Bookmark">${icon(20, 19, "0 0 20 19", svg`<path d="M10 2l2.300 5.200 5.700.5-4.300 3.800L15 17l-5-3-5 3 1.300-5.500L2 7.700l5.700-.5z" fill="none" stroke="currentColor" stroke-width="1.700"/>`)}</button>
          </div>
        </div>
        <button class="ib" aria-label="Input tools">${icon(20, 22, "0 0 20 22", svg`<path d="M0 9h20v13H0z" fill="#5f6368"/><path d="M3 18h14M3 14h2M15 14h2" stroke="#fff" stroke-width="1.500"/><path d="M3 0h14v12l-7 5-7-5z" fill="#26c0dc"/><text x="10" y="11.500" font-size="12" text-anchor="middle" fill="#fff" font-family="Roboto">A</text>`)}</button>
        <button class="ib" aria-label="Grammarly">${icon(21, 22, "0 0 22 22", svg`<circle cx="11" cy="11" r="11" fill="#15c39a"/><path d="M15.500 7A6 6 0 1 0 17 12h-4.500M17 12v4" fill="none" stroke="#fff" stroke-width="2"/>`)}</button>
        <button class="ib" aria-label="Extensions">${icon(21, 21, "0 0 24 24", svg`<path d="M20.500 11H19V7a2 2 0 0 0-2-2h-4V3.500a2.500 2.500 0 0 0-5 0V5H4a2 2 0 0 0-2 2v3.800h1.500a2.700 2.700 0 0 1 0 5.400H2V20a2 2 0 0 0 2 2h3.800v-1.500a2.700 2.700 0 0 1 5.400 0V22H17a2 2 0 0 0 2-2v-4h1.500a2.500 2.500 0 0 0 0-5z"/>`)}</button>
        <button class="ib" aria-label="Media">${icon(20, 17, "0 0 20 17", svg`<path d="M0 1h12M0 6h12M0 11h7M16 14V1h4" fill="none" stroke="currentColor" stroke-width="2"/><circle cx="14" cy="14" r="3"/>`)}</button>
        <button class="ib" aria-label="Profile"><span class="me">A</span></button>
        <button class="ib" aria-label="Menu">${icon(5, 20, "0 0 5 20", svg`<circle cx="2.500" cy="3" r="2"/><circle cx="2.500" cy="10" r="2"/><circle cx="2.500" cy="17" r="2"/>`)}</button>
      </div>
      <nav class="marks">
        <div class="marklist">${marks.map((m) => html`<a class="mark" href="#">${m.i}<span>${m.t}</span></a>`)}</div>
        <button aria-label="More bookmarks">${icon(8, 8, "0 0 8 8", svg`<path d="M1 0l3 4-3 4M4.500 0l3 4-3 4" fill="none" stroke="currentColor" stroke-width="1.500"/>`)}</button>
        <button class="reading">${icon(18, 18, "0 0 18 18", svg`<path d="M1 1h16v16H1z" fill="none" stroke="#5f6368" stroke-width="2"/><path d="M4 5h2M4 9h2M4 13h2M8 5h6M8 9h6M8 13h6" stroke="#5f6368" stroke-width="2"/>`)}Reading list</button>
      </nav>`;
  }

  private bar() {
    const c = html`<i class="caret"></i>`;
    return html`<header class="bar">
      <a class="logo" href="#" aria-label="Bubble">${bubble(19, "#888")}</a>
      <button class="pick page-pick">Page: app ${c}</button>
      <button class="pick group-pick">Group TABS EDIT ${c}</button>
      <div class="menus"><button>Edit</button><button>Help</button><span class="saved">Saved</span></div>
      <div class="right">
        <button class="gift" aria-label="Gift">${icon(21, 20, "0 0 21 20", svg`<path d="M0 6h9v5H0zM12 6h9v5h-9zM1.500 12H9v8H1.500zM12 12h7.500v8H12zM9.700 6h1.600v14H9.700z"/><path d="M10.500 6C8 6 4 6 4 3.500S9 1 10.500 6C12 1 17 1 17 3.500S13 6 10.500 6z" fill="none" stroke="currentColor" stroke-width="2"/>`)}</button>
        <button class="issue">${icon(12, 12, "0 0 12 12", svg`<path d="M6 0l6 12H0z"/><path d="M6 4v4M6 9.200v1.300" stroke="#fff" stroke-width="1.500"/>`)}1 issue</button>
        <span class="arrow">${icon(14, 16, "0 0 14 16", svg`<path d="M0 0l13 6-5 1.500 5.500 6.500-2.500 2L5.500 9 2 12.500z"/>`)}</span>
        <button class="drop">Grid &amp; borders ${c}</button>
        <button class="drop arrange">Arrange ${c}</button>
        <button class="tool cell" aria-label="Undo">${icon(17, 17, "0 0 17 17", svg`<path d="M3 2.500h5.500a6 6 0 0 1 0 12.500H5" fill="none" stroke="currentColor" stroke-width="2"/><path d="M5 0v5L1 2.500z"/>`)}</button>
        <button class="tool faint" aria-label="Redo">${icon(17, 17, "0 0 17 17", svg`<path d="M14 2.500H8.500a6 6 0 0 0 0 12.500H12" fill="none" stroke="currentColor" stroke-width="2"/><path d="M12 0v5l4-2.500z"/>`)}</button>
        <button class="tool find-tool cell" aria-label="Search">${magnifier(17, 2.4)}</button>
        <button class="drop env cell">Development ${c}</button>
        <a class="preview" href="#">Preview</a>
        <button class="tool account cell" aria-label="Account">${icon(17, 17, "0 0 18 18", svg`<circle cx="9" cy="9" r="9"/><circle cx="9" cy="7" r="3.500" fill="#fff"/><path d="M3.500 14c2-3 9-3 11 0-2 3-9 3-11 0z" fill="#fff"/>`)}</button>
      </div>
    </header>`;
  }

  private side() {
    return html`
      <nav class="rail">${rail.map((r, i) => html`<button class=${i ? "" : "on"}>${r.i}<span>${r.t}</span></button>`)}</nav>
      <aside class="side">
        <div class="modes"><button class="on">UI Builder</button><button>Responsive</button></div>
        <div class="lists">
          <i class="thumb"></i>
          <button class="head"><i class="caret"></i>Elements tree</button>
          <div class="hide"><label for="hideable">Only show hideable</label><input id="hideable" type="checkbox" /></div>
          <ul class="tree">${tree.map((n) => html`<li class=${`node ${n.d ? "deep" : ""} ${n.c ?? ""}`}>
            <span class="mk">${n.m ? icon(7, 7, "0 0 7 7", n.m === "+" ? svg`<path d="M2.500 0h2v2.500H7v2H4.500V7h-2V4.500H0v-2h2.500z"/>` : svg`<path d="M0 3h7v1.500H0z"/>`) : nothing}</span>
            <span class="nm">${n.t}</span><span class=${`ey ${n.e ?? ""}`}>${eye(n.e === "off")}</span></li>`)}</ul>
          <input class="find" aria-label="Search for new elements" placeholder="Search for new elements..." />
          <button class="head"><i class="caret"></i>Visual elements</button>
          ${visuals.map((v) => html`<button class="vis"><span class="pic">${v.i}</span><span>${v.t}</span></button>`)}
        </div>
      </aside>
      <button class="strip" aria-label="Collapse panel"><i></i></button>`;
  }

  private canvas() {
    return html`<main class="canvas">
      <div class="menu">
        <div class="brand box">
          <div class="mark-box box">${icon(30, 27, "0 0 30 27", svg`<path d="M2.500 14v5c0 7 10 7 10 0V8c0-6 8.500-6 8.500 0v4" fill="none" stroke="#fff" stroke-width="5"/><path d="M19.500 15v4c0 6 8 6 8 0v-5" fill="none" stroke="#fff" stroke-width="4.600"/>`)}</div>
          <span>MAKE MY HOME</span>
        </div>
        <button class="new"><span>New Project</span></button>
        <div class="entry first">
          <span class="sq">${icon(25, 22, "0 0 25 22", svg`<path d="M0 0h4v4H0zM5 0h20v4H5zM0 6h4v4H0zM5 6h20v4H5zM0 12h4v4H0zM5 12h20v4H5zM0 18h4v4H0zM5 18h20v4H5z"/>`)}</span>
          <span class="lab">Projects</span>
          <button class="sq end" aria-label="Open projects">${icon(9, 15, "0 0 9 15", svg`<path d="M1 1l6 6.500L1 14" fill="none" stroke="#fff" stroke-width="2.200"/>`)}</button>
        </div>
        <div class="nest"><div class="outer"><div class="line">
          <span class="sq">${icon(9, 14, "0 0 9 14", svg`<path d="M0 0l9 7-9 7z"/>`)}</span>
          <span class="txt">Parent group's Soc...</span><span class="cog">${gear(19)}</span>
        </div></div></div>
        <div class="gap"></div>
        <div class="entry">
          <span class="sq">${icon(26, 24, "0 0 26 24", svg`<path d="M0 0h2v21h24v2H0z"/><path d="M4 18l7-9 4 4 7-9" fill="none" stroke="#fff" stroke-width="3.500"/><path d="M17 2h8v9z"/>`)}</span>
          <span class="lab">Analytics</span>
        </div>
        <div class="gap small"></div>
        <div class="entry">
          <span class="sq">${icon(26, 25, "0 0 26 25", svg`<circle cx="5.500" cy="4" r="4"/><circle cx="20.500" cy="4" r="4"/><path d="M0 14c0-7 4-6 7-5v5zM26 14c0-7-4-6-7-5v5z"/><circle cx="13" cy="8.500" r="6" stroke="#6486cc"/><path d="M3.500 21c0-7 3-8 5-8 3 2.500 6 2.500 9 0 2 0 5 1 5 8 0 5-19 5-19 0z" stroke="#6486cc" stroke-width=".6"/>`)}</span>
          <span class="lab wide">Team Members</span>
        </div>
      </div>
      <div class="page">
        <div class="hdr-back"><div class="hdr">
          <h1 class="title">app's project's Name of the Society</h1>
          <div class="who"><span class="cogbox">${gear(27)}</span><div class="face"><div>Current User's Profile</div></div></div>
        </div></div>
        <section class="group">
          <div class="gtabs"><button>Society Data</button><button>Project Data</button><button>Member's Data</button></div>
          <div class="rep blue"><span>a...</span><span>a...</span><span class="long">app's project's Member's Name</span><span class="mid">app's projec...</span></div>
          <div class="rep gray"></div>
          <div class="rep green"></div>
          <div class="rep plain"><span>ap...</span><span class="tight">ap...</span><span class="long">app's project's Me...</span><span class="long">app's project's Me...</span></div>
          <i class="handle h1"></i><i class="handle h2"></i><i class="handle h3"></i>
        </section>
      </div>
    </main>
    <i class="canvas-thumb"></i>`;
  }

  private props() {
    return html`<section class="props">
      <div class="ptitle"><h2>Group TABS EDIT</h2>
        <button aria-label="Help">${icon(16, 16, "0 0 16 16", svg`<circle cx="8" cy="8" r="8"/><path d="M5.500 6c0-3.500 5.500-3 5 .2C10.300 7.600 8 7.600 8 9.500M8 11v2" fill="none" stroke="#282f31" stroke-width="2"/>`)}</button>
        <button aria-label="Info">${icon(16, 16, "0 0 16 16", svg`<circle cx="8" cy="8" r="8"/><path d="M8 3v2.200M6 7.500h2.300V12M6 12.300h4.500" fill="none" stroke="#282f31" stroke-width="2"/>`)}</button>
        <button aria-label="Comment">${icon(18, 16, "0 0 18 16", svg`<path d="M9 1.500c11 0 11 10.500 0 10.500-1 0-2 0-3-.3-1 1.500-3 2.500-4.500 2.800 1-1 1.500-2 1.500-4C-1.500 7 1 1.500 9 1.500z" fill="none" stroke="currentColor" stroke-width="1.400"/>`)}</button>
        <button aria-label="Close">${cross(13, 3.6)}</button>
      </div>
      <div class="ptabs"><button class="on">Appearance</button><button>Conditional (1)</button><button class="last">Transitions</button></div>
      <div class="body">
        <i class="pthumb"></i>
        <div class="sec">
          <div class="row"><label for="ct">Type of content</label><span class="sel"><select id="ct"><option>Society Details</option></select></span></div>
          <div class="row"><label for="ds">Data source</label><input class="fld src" id="ds" value="app's project" /></div>
        </div>
        <div class="sec up">
          ${this.check("c1", "This element isn't clickable")}
          <button class="flow">Start/Edit workflow</button>
        </div>
        <div class="sec up">
          ${this.check("c2", "This element is visible on page load")}
          <p class="note">This element is not visible on page load, you can<br />show it to edit it in the Element Tree.</p>
          ${this.check("c3", "Make this element fixed-width", true)}
          <div class="row"><label for="mw">Minimum width (% of current width)</label><input class="fld num" id="mw" value="20" /></div>
          ${this.check("c4", "Apply a max width when the page is stretched", true)}
          ${this.check("c5", "Collapse this element's height when hidden", true)}
        </div>
        <div class="sec"><div class="dims">
          ${[["W", "1087"], ["H", "869"], ["X", "296"], ["Y", "179"]].map(([k, v]) => html`<div><label for=${k}>${k}</label><input id=${k} .value=${v} /></div>`)}
        </div></div>
        <div class="sec"><div class="row"><label for="st">Style</label><span class="sel big"><select id="st"><option></option></select></span></div></div>
        <div class="sec">
          <div class="row"><label for="bs">Background style</label><span class="sel"><select id="bs"><option>Flat color</option></select></span></div>
          <div class="row"><label for="hx">Color</label><div class="col"><span class="hex"><input id="hx" value="#FFFFFF" /><i></i></span><input class="pct" aria-label="Opacity" value="100" /></div></div>
        </div>
        <div class="sec last">${this.check("c6", "Define each border independently", false, true)}</div>
      </div>
    </section>`;
  }

  private taskbar() {
    return html`<footer class="task">
      <button class="start" aria-label="Start">${icon(20, 20, "0 0 20 20", svg`<path d="M0 2.800 8 1.600v7.900H0zM9 1.400 20 0v9.500H9zM0 10.500h8v7.900L0 17.200zM9 10.500h11V20L9 18.600z" fill="#fff"/>`)}</button>
      <label class="search">${icon(21, 21, "0 0 20 20", svg`<circle cx="12.500" cy="7" r="6" fill="none" stroke="#222" stroke-width="1.500"/><path d="M8.500 11.500.5 19.500" stroke="#222" stroke-width="1.500"/>`)}<input aria-label="Search" placeholder="Type here to search" /></label>
      ${slots.map((s) => html`<button class=${`slot ${s.on ?? ""}`} aria-label=${s.n}>${s.i}</button>`)}
      <div class="level">91%</div>
      <button class="wx">${icon(25, 24, "0 0 25 24", svg`<path d="M6 17a6 6 0 0 1-1-11.500C7-1 17-1 19 5c7 0 8 12 0 12z" fill="#b9dcfb"/><path d="M8 15c-3-6 4-9 8-6 3-3 8 0 6 5-1 3-3 3-5 3h-6z" fill="#e6f3ff"/><path d="M13 13c2 4 3 5 3 7a3 3 0 0 1-6 0c0-2 1-3 3-7z" fill="#3f8fee"/>`)}<span>27°C  Light rain</span></button>
      ${tray.map((t) => html`<button class="tray" aria-label=${t.n}>${t.i}</button>`)}
      <div class="lang"><span>ENG</span><span>IN</span></div>
      <div class="clock"><span>12:22 AM</span><span>10-Oct-21</span></div>
      <button class="bell" aria-label="Notifications">${icon(30, 31, "0 0 30 31", svg`<path d="M0 0h20v17H7l-3 4v-4H0z" fill="#fff"/><path d="M4 4.500h12M4 8.500h12M4 12.500h8" stroke="#1b2844" stroke-width="1.500"/><circle cx="19.500" cy="20" r="10" fill="#333a42" stroke="#b5b9bf"/><text x="19.500" y="25" font-size="14" text-anchor="middle" fill="#fff" font-family="Open Sans">11</text>`)}</button>
    </footer>`;
  }

  render() {
    return html`${this.browser()}${this.bar()}
      <div class="work">${this.side()}${this.canvas()}${this.props()}</div>
      ${this.taskbar()}`;
  }
}
